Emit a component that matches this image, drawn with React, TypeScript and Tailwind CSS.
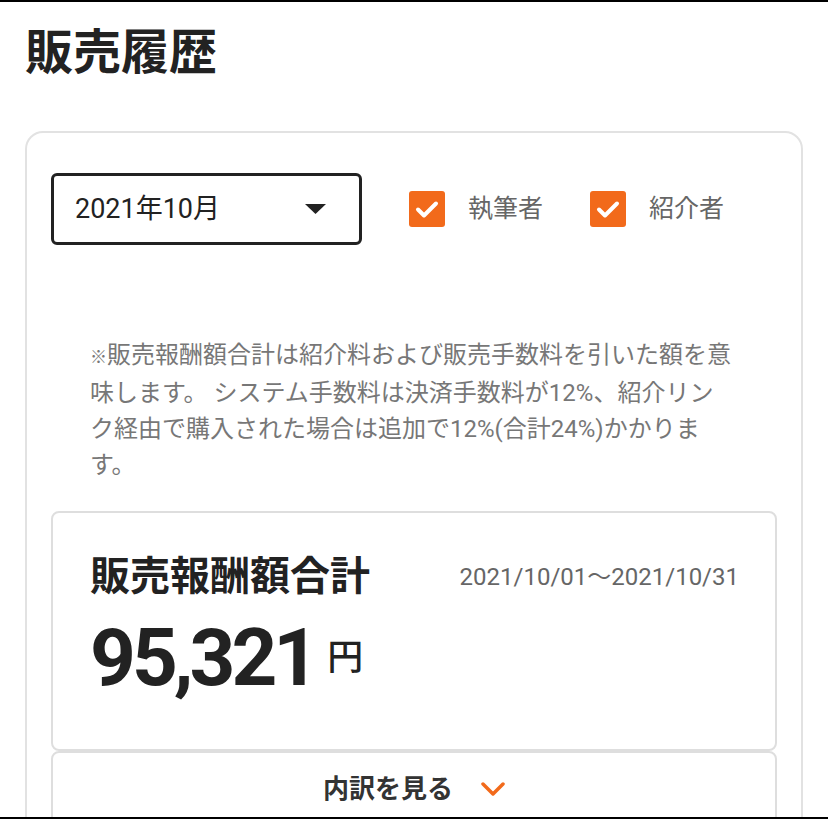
function CheckBox({ label }: { label: string }) {
    return (
        <label className="flex items-center gap-[23px]">
            <span className="w-[36px] h-[36px] rounded-[3px] bg-[#f26a1b] flex items-center justify-center">
                <svg width="36" height="36" viewBox="0 0 36 36">
                    <polyline points="9,18.5 15,24.5 27,12.5" fill="none" stroke="#fff" strokeWidth="4" strokeLinecap="round" strokeLinejoin="round" />
                </svg>
            </span>
            <span className="text-[25px] leading-[36px] text-[#666]">{label}</span>
        </label>
    );
}

export default function App() {
    return (
        <div className="w-[828px] h-[819px] overflow-hidden bg-white border-y-2 border-black font-['Roboto','Noto_Sans_CJK_JP',sans-serif]">
            {/* Header */}
            <h1 className="px-[25px] pt-[23px] text-[48px] leading-[56px] font-bold text-[#222]">販売履歴</h1>

            {/* Main card */}
            <div className="mx-[25px] mt-[50px] rounded-[18px] border-2 border-[#e2e2e2] px-[24px] pt-[40px]">
                {/* Filters */}
                <div className="flex items-center">
                    <div className="w-[311px] h-[72px] border-[3px] border-[#222] rounded-[6px] pl-[21px] pr-[33px] flex items-center justify-between">
                        <span className="text-[27px] text-[#222]">2021年10月</span>
                        <svg width="21" height="10" viewBox="0 0 21 10">
                            <polygon points="0,0 21,0 10.5,10" fill="#222" />
                        </svg>
                    </div>
                    <div className="ml-[47px] flex items-center gap-[47px]">
                        <CheckBox label="執筆者" />
                        <CheckBox label="紹介者" />
                    </div>
                </div>

                {/* Note */}
                <p className="mt-[92px] pl-[39px] pr-[42px] text-[24px] leading-[36px] text-[#777]">
                    <span className="text-[17px]">※</span>販売報酬額合計は紹介料および販売手数料を引いた額を意味します。 システム手数料は決済手数料が12%、紹介リンク経由で購入された場合は追加で12%(合計24%)かかります。
                </p>

                {/* Summary */}
                <div className="mt-[28px] h-[240px] rounded-[8px] border-2 border-[#dedede] pl-[37px] pr-[36px] pt-[40px]">
                    <div className="flex items-center justify-between">
                        <h2 className="text-[40px] leading-[48px] font-bold text-[#222]">販売報酬額合計</h2>
                        <span className="text-[24px] text-[#666]">2021/10/01〜2021/10/31</span>
                    </div>
                    <div className="mt-[17px] flex items-center">
                        <span className="text-[80px] leading-[80px] font-bold tracking-[-4px] text-[#222]">95,321</span>
                        <span className="ml-[12px] text-[36px] leading-[40px] font-medium text-[#222]">円</span>
                    </div>
                </div>

                {/* Breakdown toggle */}
                <div className="h-[90px] pb-[14px] rounded-[8px] border-2 border-[#dedede] flex items-center justify-center gap-[28px]">
                    <span className="text-[26px] font-bold text-[#333]">内訳を見る</span>
                    <svg width="24" height="14" viewBox="0 0 24 14">
                        <polyline points="2,2 12,12 22,2" fill="none" stroke="#f26a1b" strokeWidth="3.5" strokeLinecap="round" strokeLinejoin="round" />
                    </svg>
                </div>
            </div>
        </div>
    );
}
